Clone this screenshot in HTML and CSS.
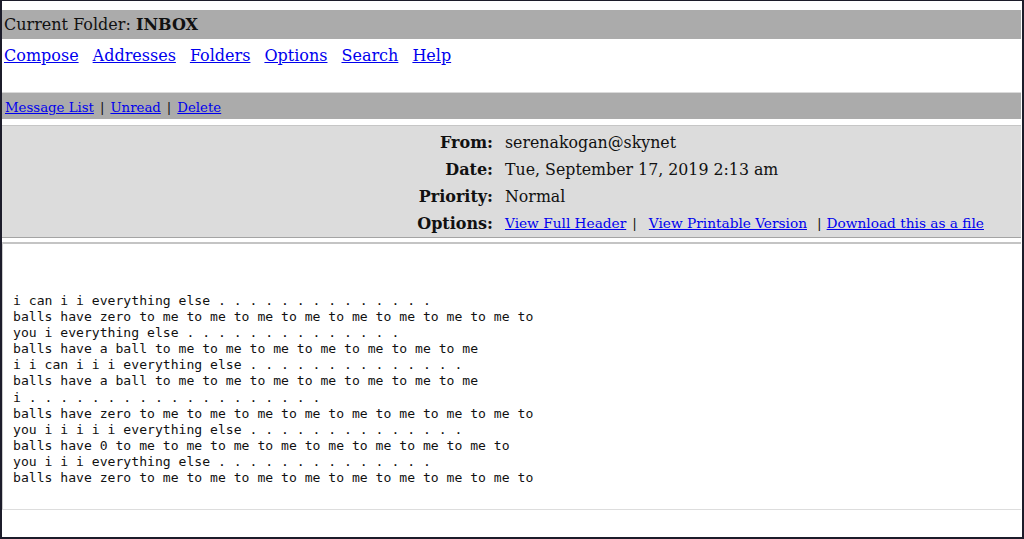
FILE: index.html
```html
<!DOCTYPE html>
<html>
<head>
<meta charset="utf-8">
<title>INBOX</title>
<link rel="stylesheet" href="styles.css">
</head>
<body>
<div class="frame">
  <div class="folderbar">Current Folder: <b>INBOX</b></div>
  <nav class="nav">
    <a href="#">Compose</a>
    <a href="#">Addresses</a>
    <a href="#">Folders</a>
    <a href="#">Options</a>
    <a href="#">Search</a>
    <a href="#">Help</a>
  </nav>
  <div class="msgbar">
    <a href="#">Message List</a><span class="sep">|</span><a href="#">Unread</a><span class="sep">|</span><a href="#">Delete</a>
  </div>
  <div class="hdr">
    <div class="row"><div class="lbl">From:</div><div class="val">serenakogan@skynet</div></div>
    <div class="row"><div class="lbl">Date:</div><div class="val">Tue, September 17, 2019 2:13 am</div></div>
    <div class="row"><div class="lbl">Priority:</div><div class="val">Normal</div></div>
    <div class="row"><div class="lbl">Options:</div><div class="val opts"><a href="#">View Full Header</a><span class="osep1">|</span><a href="#">View Printable Version</a><span class="osep2">|</span><a href="#">Download this as a file</a></div></div>
  </div>
  <div class="body">
<pre>i can i i everything else . . . . . . . . . . . . . .
balls have zero to me to me to me to me to me to me to me to me to
you i everything else . . . . . . . . . . . . . .
balls have a ball to me to me to me to me to me to me to me
i i can i i i everything else . . . . . . . . . . . . . .
balls have a ball to me to me to me to me to me to me to me
i . . . . . . . . . . . . . . . . . . .
balls have zero to me to me to me to me to me to me to me to me to
you i i i i i everything else . . . . . . . . . . . . . .
balls have 0 to me to me to me to me to me to me to me to me to
you i i i everything else . . . . . . . . . . . . . .
balls have zero to me to me to me to me to me to me to me to me to</pre>
  </div>
</div>
</body>
</html>
```
FILE: styles.css
```css
html, body {
  margin: 0;
  padding: 0;
  background: #ffffff;
}
body {
  font-family: "DejaVu Serif", serif;
  font-size: 16px;
  color: #111111;
}
a {
  color: #0000ee;
  text-decoration: underline;
}
.frame {
  box-sizing: border-box;
  height: 539px;
  border-style: solid;
  border-color: #1c1c2a;
  border-width: 1px 2px 2px 2px;
  padding: 9px 1px 0 0;
  display: flex;
  flex-direction: column;
  overflow: hidden;
}
.folderbar {
  background: #ababab;
  height: 29px;
  line-height: 30px;
  padding-left: 2px;
  font-size: 16px;
}
.nav {
  height: 53px;
  box-sizing: border-box;
  padding: 6px 0 0 2px;
  display: flex;
  gap: 14px;
  line-height: 22px;
  font-size: 16px;
}
.msgbar {
  border-top: 1px solid #dadada;
  background: #ababab;
  height: 27px;
  box-sizing: border-box;
  padding: 2px 0 0 3px;
  line-height: 25px;
  font-size: 13.3px;
}
.msgbar .sep {
  margin: 0 6px;
}
.hdr {
  margin-top: 6px;
  border-top: 1px solid #c6c6c6;
  border-bottom: 1px solid #a4a4a4;
  background: #dcdcdc;
  height: 111px;
  box-sizing: border-box;
  height: 113px;
  padding-top: 2px;
  display: flex;
  flex-direction: column;
  justify-content: center;
}
.row {
  display: grid;
  grid-template-columns: 491px 1fr;
  column-gap: 12px;
  height: 27px;
  line-height: 27px;
}
.lbl {
  text-align: right;
  font-weight: bold;
}
.val {
  font-size: 15.8px;
}
.val.opts {
  font-size: 13.7px;
}
.osep1 {
  margin: 0 12px 0 6px;
}
.osep2 {
  margin: 0 5px 0 10px;
}
.body {
  margin-top: 4px;
  border-top: 2px solid #c4c4c4;
  border-left: 1px solid #cccccc;
  border-bottom: 1px solid #dddddd;
  height: 265px;
  box-sizing: content-box;
}
.body pre {
  margin: 0;
  padding: 49px 0 0 10px;
  font-family: "DejaVu Sans Mono", monospace;
  font-size: 13.1px;
  line-height: 16.1px;
  color: #111111;
}
```
